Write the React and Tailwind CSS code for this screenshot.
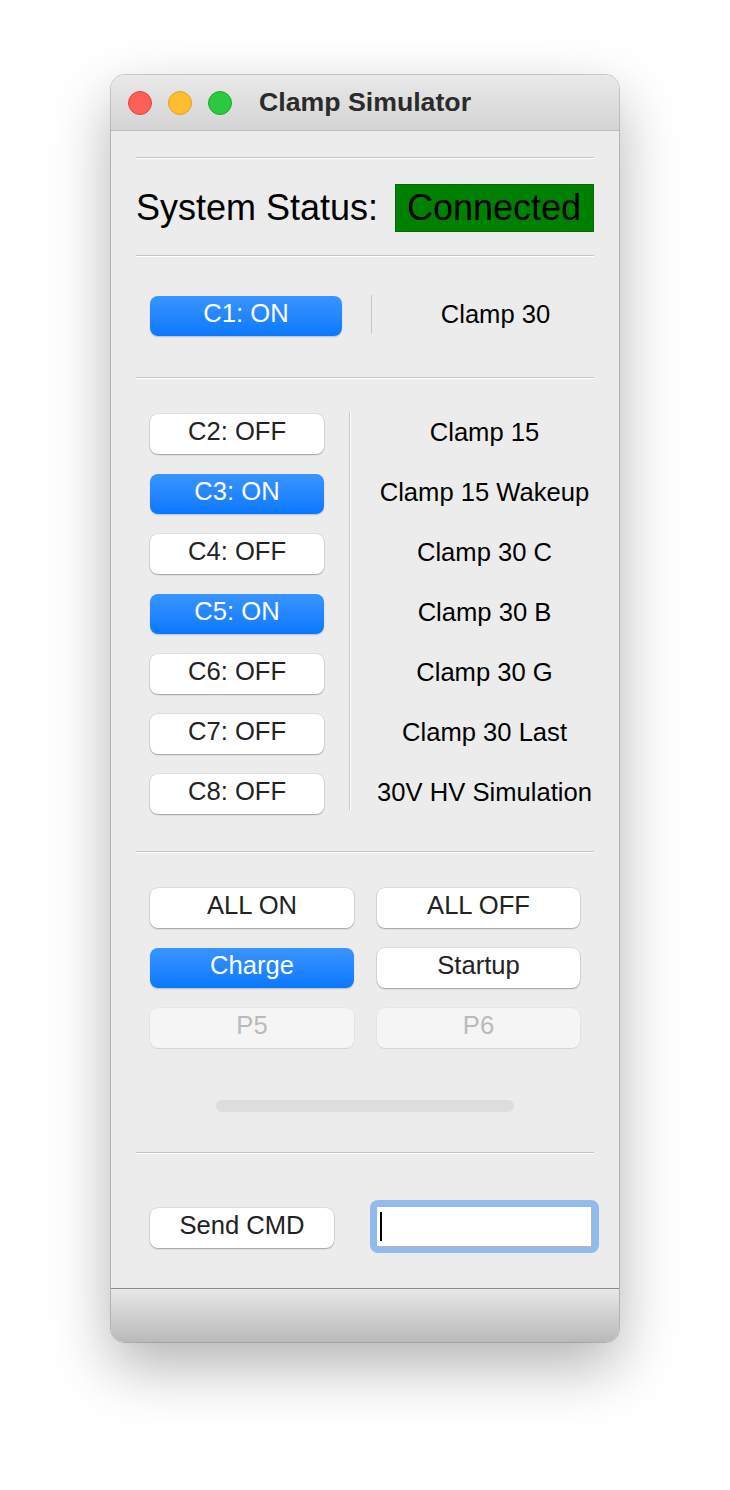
import clsx from "clsx";

const clamps = [
  { id: "C2", on: false, name: "Clamp 15" },
  { id: "C3", on: true, name: "Clamp 15 Wakeup" },
  { id: "C4", on: false, name: "Clamp 30 C" },
  { id: "C5", on: true, name: "Clamp 30 B" },
  { id: "C6", on: false, name: "Clamp 30 G" },
  { id: "C7", on: false, name: "Clamp 30 Last" },
  { id: "C8", on: false, name: "30V HV Simulation" },
];

const Btn = ({ children, on, disabled, className }) => (
  <button
    disabled={disabled}
    className={clsx(
      "h-10 rounded-[8px] pb-1 text-[25.6px] leading-none",
      on && "bg-linear-to-b from-[#3894ff] to-[#0778ff] text-white shadow-[0_1px_1.5px_rgba(0,0,0,0.2)]",
      disabled && "bg-[#f5f5f5] text-[#bababa] shadow-[0_0_0_0.5px_rgba(0,0,0,0.05),0_1px_1px_rgba(0,0,0,0.08)]",
      !on && !disabled && "bg-white text-[#222] shadow-[0_0_0_0.5px_rgba(0,0,0,0.12),0_1px_1.5px_rgba(0,0,0,0.28)]",
      className
    )}
  >
    {children}
  </button>
);

const Sep = ({ className }) => (
  <div className={clsx("border-t border-t-[#c4c4c4] border-b border-b-white", className)} />
);

const Light = ({ color, ring }) => (
  <span className={clsx("block h-6 w-6 rounded-full border", color, ring)} />
);

export default function App() {
  return (
    <div className="min-h-[1490px] bg-white pl-[111px] pt-[75px] font-['Liberation_Sans',Arial,sans-serif]">
      <div className="w-[508px] overflow-hidden rounded-[14px] bg-[#ececec] shadow-[0_24px_60px_rgba(0,0,0,0.3),0_0_0_1px_rgba(0,0,0,0.18)]">
        {/* title bar */}
        <div className="relative flex h-[56px] items-center border-b border-b-[#bcbcbc] bg-linear-to-b from-[#e9e9e9] to-[#d4d4d4] pl-[17px]">
          <div className="flex gap-4">
            <Light color="bg-[#fe5f57]" ring="border-[#e2463f]" />
            <Light color="bg-[#febc2e]" ring="border-[#e0a12a]" />
            <Light color="bg-[#2bc840]" ring="border-[#1ea935]" />
          </div>
          <div className="absolute inset-x-0 text-center text-[26.7px] font-bold text-[#2b2b2b]">Clamp Simulator</div>
        </div>

        {/* content */}
        <div className="px-[25px]">
          <Sep className="mt-[26px]" />

          <div className="mt-[25px] flex h-12 items-center justify-between">
            <span className="text-[36px] text-black">System Status:</span>
            <span className="flex h-12 w-[199px] items-center border border-[#0a640a] bg-[#008000] pl-[11px] text-[36px] text-black">
              Connected
            </span>
          </div>

          <Sep className="mt-[23px]" />

          <div className="mt-[39px] flex h-10 items-center pl-[14px]">
            <Btn on className="w-[192px]">C1: ON</Btn>
            <div className="ml-[29px] h-[39px] w-px -translate-y-[2px] bg-[#c6c6c6]" />
            <div className="flex-1 pb-1 pl-[25px] text-center text-[25.6px] text-black">Clamp 30</div>
          </div>

          <Sep className="mt-[41px]" />

          <div className="mt-[35px] flex pl-[14px]">
            <div className="flex w-[174px] flex-col gap-5">
              {clamps.map((c) => (
                <Btn key={c.id} on={c.on}>
                  {c.id}: {c.on ? "ON" : "OFF"}
                </Btn>
              ))}
            </div>
            <div className="ml-[25px] mb-[4px] -mt-px w-[2px] border-l border-l-[#c6c6c6] border-r border-r-white" />
            <div className="ml-[24px] flex flex-1 flex-col gap-5">
              {clamps.map((c) => (
                <div key={c.id} className="flex h-10 items-center justify-center whitespace-nowrap pb-1 text-[25.6px] text-black">
                  {c.name}
                </div>
              ))}
            </div>
          </div>

          <Sep className="mt-[37px]" />

          <div className="mt-[35px] grid grid-cols-[204px_203px] gap-x-[23px] gap-y-5 pl-[14px]">
            <Btn>ALL ON</Btn>
            <Btn>ALL OFF</Btn>
            <Btn on>Charge</Btn>
            <Btn>Startup</Btn>
            <Btn disabled>P5</Btn>
            <Btn disabled>P6</Btn>
          </div>

          <div className="mt-[52px] flex justify-center">
            <div className="h-3 w-[298px] rounded-full bg-[#dddddd]" />
          </div>

          <Sep className="mt-[40px]" />

          <div className="mt-[46px] flex items-start pl-[14px]">
            <Btn className="mt-2 w-[184px]">Send CMD</Btn>
            <div className="ml-[36px] -mr-[6px] flex h-[53px] w-[229px] rounded-[8px] bg-[#93baed] p-[7px] pb-[6px]">
              <div className="flex flex-1 items-center border-r border-b border-[#b6b6b6] bg-white pl-[3px]">
                <span className="block h-[29px] w-[2px] bg-black" />
              </div>
            </div>
          </div>

          <div className="h-[35px]" />
        </div>

        {/* bottom bar */}
        <div className="h-[54px] border-t border-t-[#8a8a8a] bg-linear-to-b from-[#e8e8e8] to-[#b9b9b9]" />
      </div>
    </div>
  );
}
